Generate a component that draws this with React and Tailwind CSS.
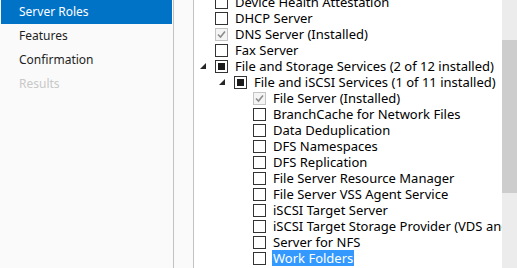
const navItems = [
  { label: 'Server Roles', state: 'active' },
  { label: 'Features', state: 'normal' },
  { label: 'Confirmation', state: 'normal' },
  { label: 'Results', state: 'disabled' },
];

const rows = [
  { label: 'Device Health Attestation', level: 0, check: 'off' },
  { label: 'DHCP Server', level: 0, check: 'off' },
  { label: 'DNS Server (Installed)', level: 0, check: 'installed' },
  { label: 'Fax Server', level: 0, check: 'off' },
  { label: 'File and Storage Services (2 of 12 installed)', level: 0, check: 'partial', expanded: true },
  { label: 'File and iSCSI Services (1 of 11 installed)', level: 1, check: 'partial', expanded: true },
  { label: 'File Server (Installed)', level: 2, check: 'installed' },
  { label: 'BranchCache for Network Files', level: 2, check: 'off' },
  { label: 'Data Deduplication', level: 2, check: 'off' },
  { label: 'DFS Namespaces', level: 2, check: 'off' },
  { label: 'DFS Replication', level: 2, check: 'off' },
  { label: 'File Server Resource Manager', level: 2, check: 'off' },
  { label: 'File Server VSS Agent Service', level: 2, check: 'off' },
  { label: 'iSCSI Target Server', level: 2, check: 'off' },
  { label: 'iSCSI Target Storage Provider (VDS and VSS hardware providers)', level: 2, check: 'off' },
  { label: 'Server for NFS', level: 2, check: 'off' },
  { label: 'Work Folders', level: 2, check: 'off', selected: true },
];

const indent = ['pl-[6px]', 'pl-[25px]', 'pl-[44px]'];

function Checkbox({ check }) {
  if (check === 'installed') {
    return (
      <span className="w-[13px] h-[13px] shrink-0 border border-[#c4c4c4] bg-[#f4f4f4] flex items-center justify-center">
        <svg width="9" height="9" viewBox="0 0 9 9">
          <path d="M1 4.5 L3.5 7 L8 1.5" fill="none" stroke="#8c8c8c" strokeWidth="1.6" />
        </svg>
      </span>
    );
  }
  if (check === 'partial') {
    return (
      <span className="w-[13px] h-[13px] shrink-0 border border-[#333] bg-white flex items-center justify-center">
        <span className="w-[7px] h-[7px] bg-[#1a1a1a]" />
      </span>
    );
  }
  return <span className="w-[13px] h-[13px] shrink-0 border border-[#333] bg-white" />;
}

function Expander({ expanded }) {
  return (
    <span className="w-[15px] shrink-0 flex items-center">
      {expanded && (
        <svg width="6" height="6" viewBox="0 0 6 6">
          <path d="M6 0 L6 6 L0 6 Z" fill="#262626" />
        </svg>
      )}
    </span>
  );
}

export default function App() {
  return (
    <div
      className="w-[517px] h-[268px] flex overflow-hidden bg-white text-[13px] text-black"
      style={{ fontFamily: '"Segoe UI", "Noto Sans", sans-serif' }}
    >
      <nav className="w-[174px] shrink-0 bg-[#fafafa] border-r border-[#c2c2c2] flex flex-col text-[12px]">
        {navItems.map((item) => (
          <div
            key={item.label}
            className={
              item.state === 'active'
                ? 'h-[24px] ml-px mr-px flex items-center pl-[18px] bg-[#0173c7] text-white'
                : item.state === 'disabled'
                ? 'h-[24px] flex items-center pl-[19px] text-[#c8c8c8]'
                : 'h-[24px] flex items-center pl-[19px] text-[#1e1e1e]'
            }
          >
            {item.label}
          </div>
        ))}
      </nav>
      <div className="w-[20px] shrink-0 bg-[#fafafa] border-r border-[#c2c2c2]" />
      <div className="flex-1 flex min-w-0">
        <div className="flex-1 min-w-0 overflow-hidden">
          <div className="-mt-[6px]">
            {rows.map((row) => (
              <div key={row.label} className={`h-[16px] flex items-center whitespace-nowrap ${indent[row.level]}`}>
                <Expander expanded={row.expanded} />
                <Checkbox check={row.check} />
                <span
                  className={
                    row.selected
                      ? 'ml-[6px] px-px bg-[#3399ff] text-white leading-[16px]'
                      : 'ml-[7px] leading-[16px]'
                  }
                >
                  {row.label}
                </span>
              </div>
            ))}
          </div>
        </div>
        <div className="w-[15px] shrink-0 bg-[#ececec] pt-[40px]">
          <div className="h-[153px] bg-[#cdcdcd]" />
        </div>
      </div>
    </div>
  );
}
